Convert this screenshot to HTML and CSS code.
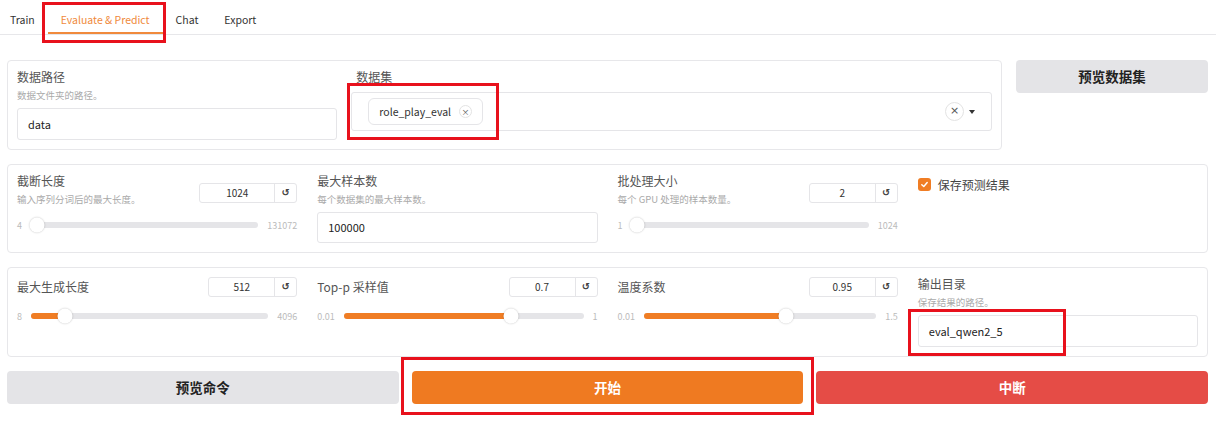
FILE: index.html
```html
<!DOCTYPE html>
<html>
<head>
	<title>Evaluate &amp; Predict</title>
	<link rel="stylesheet" href="styles.css">
</head>
<body>
	<div class="page">
		<div class="tabs">
			<div class="tab first">Train</div>
			<div class="tab active">Evaluate &amp; Predict</div>
			<div class="tab">Chat</div>
			<div class="tab">Export</div>
		</div>

		<div class="main">
			<div class="row-data">
				<div class="panel cols-data">
					<div class="field">
						<div class="label">数据路径</div>
						<div class="info">数据文件夹的路径。</div>
						<div class="input">data</div>
					</div>
					<div class="field">
						<div class="label label-dd">数据集</div>
						<div class="dropdown">
							<div class="chip">role_play_eval <span class="chip-x">×</span></div>
							<div class="dd-icons">
								<span class="dd-clear">×</span>
								<span class="dd-caret"></span>
							</div>
						</div>
					</div>
				</div>
				<div>
					<div class="btn btn-gray btn-top">预览数据集</div>
				</div>
			</div>

			<div class="panel grid4">
				<div class="field">
					<div class="slider-head">
						<div>
							<div class="label">截断长度</div>
							<div class="info">输入序列分词后的最大长度。</div>
						</div>
						<div class="num with-info"><span class="num-val wide">1024</span><span class="num-reset">↺</span></div>
					</div>
					<div class="slider">
						<span class="lim">4</span>
						<div class="track"><div class="fill" style="width: 2%"></div><div class="thumb" style="left: 2.5%"></div></div>
						<span class="lim">131072</span>
					</div>
				</div>
				<div class="field">
					<div class="label">最大样本数</div>
					<div class="info">每个数据集的最大样本数。</div>
					<div class="input input-low">100000</div>
				</div>
				<div class="field">
					<div class="slider-head">
						<div>
							<div class="label">批处理大小</div>
							<div class="info">每个 GPU 处理的样本数量。</div>
						</div>
						<div class="num with-info"><span class="num-val">2</span><span class="num-reset">↺</span></div>
					</div>
					<div class="slider">
						<span class="lim">1</span>
						<div class="track"><div class="fill" style="width: 1%"></div><div class="thumb" style="left: 2.5%"></div></div>
						<span class="lim">1024</span>
					</div>
				</div>
				<div class="field">
					<label class="check"><span class="box">
						<svg width="9" height="9" viewBox="0 0 10 10"><path d="M2 5.2 L4.2 7.3 L8 2.8" fill="none" stroke="#fff" stroke-width="1.6" stroke-linecap="round" stroke-linejoin="round"/></svg>
					</span>保存预测结果</label>
				</div>
			</div>

			<div class="panel grid4">
				<div class="field">
					<div class="slider-head">
						<div class="label">最大生成长度</div>
						<div class="num"><span class="num-val">512</span><span class="num-reset">↺</span></div>
					</div>
					<div class="slider">
						<span class="lim">8</span>
						<div class="track"><div class="fill" style="width: 14.5%"></div><div class="thumb" style="left: 14.5%"></div></div>
						<span class="lim">4096</span>
					</div>
				</div>
				<div class="field">
					<div class="slider-head">
						<div class="label">Top-p 采样值</div>
						<div class="num"><span class="num-val">0.7</span><span class="num-reset">↺</span></div>
					</div>
					<div class="slider">
						<span class="lim">0.01</span>
						<div class="track"><div class="fill" style="width: 69.7%"></div><div class="thumb" style="left: 69.7%"></div></div>
						<span class="lim">1</span>
					</div>
				</div>
				<div class="field">
					<div class="slider-head">
						<div class="label">温度系数</div>
						<div class="num"><span class="num-val">0.95</span><span class="num-reset">↺</span></div>
					</div>
					<div class="slider">
						<span class="lim">0.01</span>
						<div class="track"><div class="fill" style="width: 61%"></div><div class="thumb" style="left: 61%"></div></div>
						<span class="lim">1.5</span>
					</div>
				</div>
				<div class="field">
					<div class="label">输出目录</div>
					<div class="info">保存结果的路径。</div>
					<div class="input">eval_qwen2_5</div>
				</div>
			</div>

			<div class="buttons">
				<div class="btn btn-gray">预览命令</div>
				<div class="btn btn-orange">开始</div>
				<div class="btn btn-red">中断</div>
			</div>
		</div>

		<!-- red annotation boxes -->
		<div class="mark mark-tab"></div>
		<div class="mark mark-data"></div>
		<div class="mark mark-out"></div>
		<div class="mark mark-start"></div>
	</div>
</body>
</html>
```

FILE: styles.css
```css
body {
	margin: 0;
	background: #fff;
	font-family: "Noto Sans CJK SC", "Noto Sans", sans-serif;
	color: #333;
}

.page {
	position: relative;
	width: 1216px;
	height: 429px;
	overflow: hidden;
}

/* tabs */
.tabs {
	display: flex;
	height: 34px;
	border-bottom: 1px solid #e7e7ea;
}

.tab {
	padding: 13px 13px 0;
	height: 34px;
	box-sizing: border-box;
	font-size: 10.5px;
	line-height: 14px;
	color: #333;
}

.tab.first {
	padding-left: 10px;
}

.tab.active {
	color: #f08a3c;
	border-bottom: 2px solid #f08a3c;
}

.main {
	padding: 25px 8px 0 7px;
	display: flex;
	flex-direction: column;
	gap: 14px;
}

.row-data {
	display: grid;
	grid-template-columns: 1fr 192px;
	gap: 14px;
}

.panel {
	border: 1px solid #e7e7ea;
	border-radius: 4px;
	padding: 9px;
}

.cols-data {
	display: grid;
	grid-template-columns: 1fr 2fr;
	gap: 14px;
}

.grid4 {
	display: grid;
	grid-template-columns: repeat(4, 1fr);
	gap: 20px;
}

.label {
	font-size: 12px;
	line-height: 14px;
	color: #555;
}

.label-dd {
	padding-left: 5px;
}

.info {
	margin-top: 4px;
	font-size: 9.5px;
	line-height: 14px;
	color: #aaa;
}

.input {
	margin-top: 6px;
	height: 32px;
	box-sizing: border-box;
	border: 1px solid #e5e5e8;
	border-radius: 3px;
	padding: 0 10px;
	font-size: 11px;
	line-height: 30px;
	color: #222;
}

.input-low {
	height: 31px;
	line-height: 29px;
}

/* dataset dropdown */
.dropdown {
	margin-top: 8px;
	height: 39px;
	box-sizing: border-box;
	border: 1px solid #e5e5e8;
	border-radius: 3px;
	padding: 5px 16px 5px 16px;
	display: flex;
	align-items: center;
	justify-content: space-between;
}

.chip {
	height: 27px;
	box-sizing: border-box;
	border: 1px solid #e5e5e8;
	border-radius: 6px;
	padding: 0 10px;
	display: flex;
	align-items: center;
	gap: 8px;
	font-size: 10.5px;
	color: #333;
}

.chip-x {
	width: 11px;
	height: 11px;
	border: 1px solid #e3e3e3;
	border-radius: 50%;
	font-size: 8px;
	line-height: 11px;
	text-align: center;
	color: #555;
}

.dd-icons {
	display: flex;
	align-items: center;
	gap: 5px;
}

.dd-clear {
	width: 17px;
	height: 17px;
	border: 1px solid #e3e3e3;
	border-radius: 50%;
	font-family: "DejaVu Sans", sans-serif;
	font-size: 11px;
	line-height: 16px;
	text-align: center;
	color: #555;
}

.dd-caret {
	width: 0;
	height: 0;
	border-left: 3px solid transparent;
	border-right: 3px solid transparent;
	border-top: 4px solid #333;
}

/* sliders */
.slider-head {
	display: flex;
	justify-content: space-between;
	align-items: center;
}

.num {
	display: flex;
	height: 20px;
	box-sizing: border-box;
	border: 1px solid #e5e5e8;
	border-radius: 3px;
	font-size: 10px;
	line-height: 18px;
	color: #333;
}

.num.with-info {
	margin-top: 6px;
}

.num-val {
	width: 65px;
	text-align: center;
}

.num-val.wide {
	width: 74px;
}

.num-reset {
	width: 21px;
	border-left: 1px solid #e5e5e8;
	text-align: center;
	font-family: "DejaVu Sans", sans-serif;
	font-size: 10px;
	font-weight: bold;
	color: #444;
}

.slider {
	margin-top: 12px;
	height: 14px;
	display: flex;
	align-items: center;
	gap: 9px;
}

.lim {
	font-size: 9px;
	color: #bbb;
}

.track {
	position: relative;
	flex: 1;
	height: 6px;
	border-radius: 3px;
	background: #e5e5e8;
}

.fill {
	height: 6px;
	border-radius: 3px;
	background: #f07d24;
}

.thumb {
	position: absolute;
	top: 50%;
	width: 15px;
	height: 15px;
	border-radius: 50%;
	background: #fff;
	box-shadow: 0 0 2px rgba(0, 0, 0, 0.25);
	transform: translate(-50%, -50%);
}

/* checkbox */
.check {
	display: flex;
	align-items: center;
	gap: 7px;
	margin-top: 2px;
	font-size: 12px;
	color: #444;
}

.check .box {
	width: 13px;
	height: 13px;
	border-radius: 3px;
	background: #f07d24;
	display: flex;
	align-items: center;
	justify-content: center;
}

/* buttons */
.buttons {
	display: grid;
	grid-template-columns: repeat(3, 1fr);
	gap: 13px;
}

.btn {
	height: 33px;
	border-radius: 4px;
	font-size: 13.5px;
	font-weight: bold;
	line-height: 33px;
	text-align: center;
}

.btn-gray {
	background: #e4e4e7;
	color: #222;
}

.btn-orange {
	background: #ef7a21;
	color: #fff;
}

.btn-red {
	background: #e54c46;
	color: #fff;
}

/* red marks */
.mark {
	position: absolute;
	border: 3px solid #e8111c;
	box-sizing: border-box;
}

.mark-tab {
	left: 42px;
	top: 2px;
	width: 124px;
	height: 41px;
}

.mark-data {
	left: 347px;
	top: 83px;
	width: 152px;
	height: 57px;
}

.mark-out {
	left: 908px;
	top: 309px;
	width: 158px;
	height: 47px;
}

.mark-start {
	left: 401px;
	top: 357px;
	width: 413px;
	height: 58px;
}
```
